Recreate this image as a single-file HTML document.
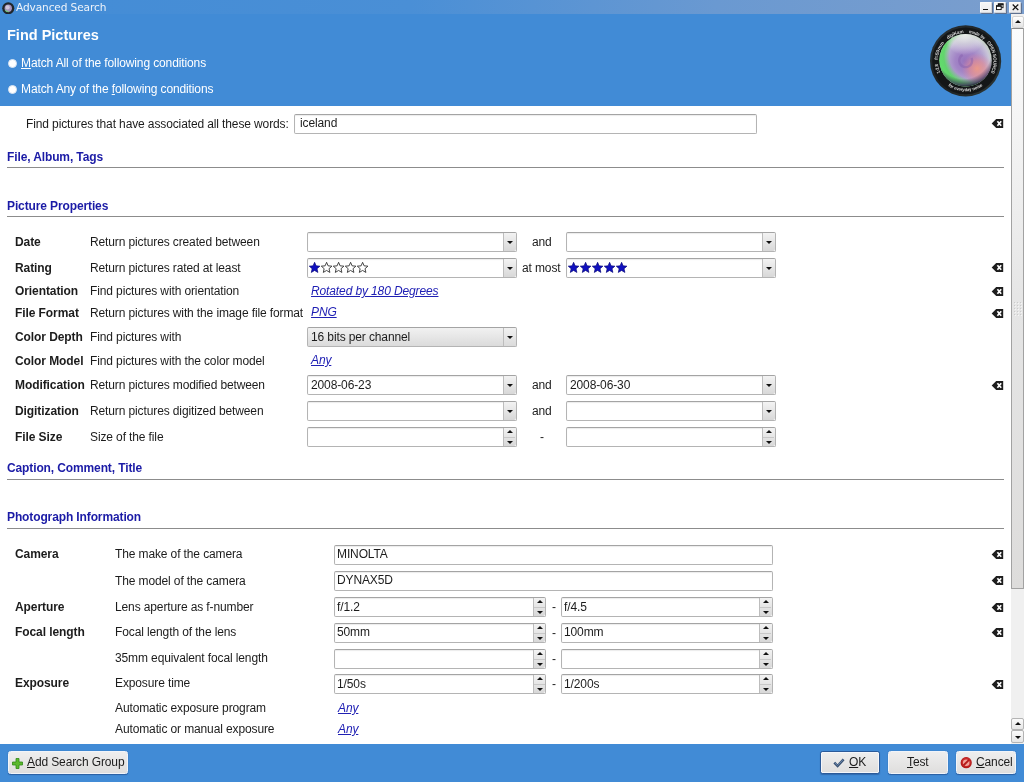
<!DOCTYPE html>
<html><head><meta charset="utf-8"><title>Advanced Search</title>
<style>
*{box-sizing:border-box;margin:0;padding:0}
html,body{width:1024px;height:782px;overflow:hidden;background:#fff}
body{font-family:"Liberation Sans",sans-serif;font-size:12px;letter-spacing:-0.12px;color:#1c1c1c;position:relative}
div,span,svg{position:absolute}
#titlebar{left:0;top:0;width:1024px;height:14px;background:linear-gradient(90deg,#438cd6 0%,#4a8fd6 40%,#6a99d1 70%,#7b9ecd 100%)}
#titlebar .tt{left:16px;top:-0.5px;font-family:"DejaVu Sans",sans-serif;font-size:10.6px;color:#eef3fa;line-height:14px;white-space:nowrap}
.wb{top:2px;width:12px;height:10.5px;background:linear-gradient(#f6f6f6,#ececee);border:1px solid #fafafa;border-right-color:#d0d4da;border-bottom-color:#d0d4da;border-radius:1px;box-shadow:1px 1px 0 #5f7190}
#header{left:0;top:14px;width:1011px;height:92px;background:#418bd6}
#footer{left:0;top:744px;width:1024px;height:38px;background:#418bd6}
.t,.b,.hd,.lk{white-space:nowrap;line-height:16px;height:16px;margin-top:-7px}
.b{font-weight:bold;left:15px;letter-spacing:-0.08px}
.hd{left:7px;font-weight:bold;color:#1b1ba6}
.hr{left:7px;width:997px;height:1px;background:#8c8c8c}
.lk{font-style:italic;color:#2020b4;text-decoration:underline}
.w{color:#fff}
.cb,.sp,.le{height:20px;background:#fff;border:1px solid #b4b4b4;border-top-color:#a4a4a4;border-radius:2px;box-shadow:inset 0 1px 1px rgba(0,0,0,.08)}
.cb .btn,.sp .btn{right:0;top:0;width:13px;height:18px;border-left:1px solid #bdbdbd;background:linear-gradient(#f3f3f3,#d8d8d8);border-radius:0 2px 2px 0}
.cb.g{background:linear-gradient(#f1f1f1,#dbdbdb);box-shadow:none}

.cb .v{left:3px}
.cb.g .btn{background:none;border-left:1px solid #bdbdbd}
.v{left:2px;top:1px;line-height:16px;white-space:nowrap}
.ar{left:3px;width:0;height:0;border-left:3px solid transparent;border-right:3px solid transparent}
.ar.d{border-top:3.4px solid #111}
.ar.u{border-bottom:3.4px solid #111}
.sp .btn{width:12px}
.sp .ar{left:2.5px}
.sp.w13 .btn{width:13px}
.sp.w13 .ar{left:3px}
.pb{height:23px;border:1px solid #f1f4f9;border-radius:2.5px;background:linear-gradient(#eeeeee,#dfdedd);top:751px;box-shadow:0 1px 1px rgba(25,60,120,.55),0 0 1px rgba(25,60,120,.35)}
.pb.def{border-color:#2b5a99;box-shadow:inset 0 0 0 1px #f4f6fa,0 1px 1px rgba(25,60,120,.4)}
.pb .lbl{top:2px;line-height:16px;white-space:nowrap}
.rad{left:8px;width:9px;height:9px;border-radius:50%;background:#fff;border:1px solid #d8e4f2}
</style></head><body><div id="root" style="left:0;top:0;width:1024px;height:782px;will-change:transform">
<div id="titlebar"><span class="tt">Advanced Search</span>
<svg style="left:2px;top:1.5px" width="12.5" height="12.5" viewBox="0 0 12 12"><circle cx="6" cy="6" r="5.8" fill="#20262a"/><circle cx="6" cy="6" r="3.5" fill="#a893bd"/><circle cx="5.4" cy="5.2" r="2" fill="#cfc6d8"/><path d="M3 7.5A3.5 3.5 0 0 0 6.5 9.4" stroke="#6fc878" stroke-width="1" fill="none"/></svg>
<div class="wb" style="left:980px"><div style="left:2px;top:5.8px;width:5px;height:1.6px;background:#111"></div></div>
<div class="wb" style="left:994px"><svg style="left:1px;top:0.3px" width="7.5" height="7.5" viewBox="0 0 8 7"><rect x="2.5" y="0.5" width="5" height="4" fill="none" stroke="#111"/><rect x="2" y="0" width="6" height="1.5" fill="#111"/><rect x="0.5" y="2.5" width="5" height="4" fill="#fff" stroke="#111"/><rect x="0" y="2" width="6" height="1.5" fill="#111"/></svg></div>
<div class="wb" style="left:1009px"><svg style="left:2px;top:1px" width="7" height="6.5" viewBox="0 0 7 7"><path d="M0.5 0.5L6.5 6.5M6.5 0.5L0.5 6.5" stroke="#111" stroke-width="1.3"/></svg></div>
</div>
<div id="header">
<span class="w" style="left:7px;top:12px;font-size:14.5px;letter-spacing:0;font-weight:bold;line-height:18px;white-space:nowrap">Find Pictures</span>
<div class="rad" style="top:45px"></div><span class="t w" style="left:21px;top:48px"><u>M</u>atch All of the following conditions</span>
<div class="rad" style="top:71px"></div><span class="t w" style="left:21px;top:74px">Match Any of the <u>f</u>ollowing conditions</span>
<svg style="left:930px;top:11px" width="72" height="72" viewBox="0 0 72 72">
<defs>
<radialGradient id="lg" cx="0.5" cy="0.52" r="0.5"><stop offset="0" stop-color="#9672bc"/><stop offset="0.4" stop-color="#a285c6"/><stop offset="0.68" stop-color="#b3a3d0"/><stop offset="0.9" stop-color="#c9c6d8"/><stop offset="1" stop-color="#c4cec6"/></radialGradient>
<radialGradient id="gr" cx="0.63" cy="0.42" r="0.64"><stop offset="0" stop-color="#52d45c" stop-opacity="0"/><stop offset="0.68" stop-color="#52d45c" stop-opacity="0"/><stop offset="0.85" stop-color="#58d662" stop-opacity="0.9"/><stop offset="1" stop-color="#62dc6c"/></radialGradient>
<radialGradient id="or" cx="0.72" cy="0.66" r="0.30"><stop offset="0" stop-color="#ee9a86" stop-opacity="0.95"/><stop offset="0.5" stop-color="#e48c92" stop-opacity="0.65"/><stop offset="1" stop-color="#d884a8" stop-opacity="0"/></radialGradient>
<radialGradient id="hl" cx="0.48" cy="0.0" r="0.40"><stop offset="0" stop-color="#eef0ee" stop-opacity="0.9"/><stop offset="0.5" stop-color="#e2e6e2" stop-opacity="0.55"/><stop offset="1" stop-color="#fff" stop-opacity="0"/></radialGradient>
<radialGradient id="sh" cx="0.46" cy="0.32" r="0.70"><stop offset="0.76" stop-color="#2a1840" stop-opacity="0"/><stop offset="0.92" stop-color="#3a2558" stop-opacity="0.7"/><stop offset="1" stop-color="#15101c" stop-opacity="1"/></radialGradient>
<linearGradient id="rim" x1="0" y1="0" x2="1" y2="1"><stop offset="0" stop-color="#2c3438"/><stop offset="0.5" stop-color="#1c2022"/><stop offset="1" stop-color="#303a38"/></linearGradient>
<path id="tp" d="M10.31 47.69A27.9 27.9 0 0 1 60.89 24.11A27.9 27.9 0 0 1 10.31 47.69"/>
<path id="bp" d="M17.95 60.65A30.4 30.4 0 0 0 52.60 61.10"/>
</defs>
<circle cx="35.6" cy="35.9" r="35.6" fill="url(#rim)"/>
<circle cx="35.6" cy="35.9" r="33.4" fill="#141617"/>
<g>
<circle cx="35.6" cy="35.3" r="26.2" fill="url(#lg)"/>
<circle cx="35.6" cy="35.3" r="26.2" fill="url(#gr)"/>
<circle cx="35.6" cy="35.3" r="26.2" fill="url(#or)"/>
<path d="M32.6 29.9a6.5 6.5 0 1 0 9 3" fill="none" stroke="#8660ae" stroke-width="2.4" opacity="0.45"/>
<circle cx="35.6" cy="35.3" r="26.2" fill="url(#hl)"/>
<circle cx="35.6" cy="35.3" r="26.2" fill="url(#sh)"/>
</g>
<text font-family="Liberation Sans,sans-serif" font-size="4.6" font-weight="bold" fill="#d6d6d6"><textPath href="#tp" startOffset="0.00" textLength="9.25" lengthAdjust="spacingAndGlyphs">1:2.8</textPath></text>
<text font-family="Liberation Sans,sans-serif" font-size="4.6" font-weight="bold" fill="#d6d6d6"><textPath href="#tp" startOffset="13.05" textLength="18.50" lengthAdjust="spacingAndGlyphs">f=50mm</textPath></text>
<text font-family="Liberation Sans,sans-serif" font-size="4.6" font-weight="bold" fill="#d6d6d6"><textPath href="#tp" startOffset="36.62" textLength="17.19" lengthAdjust="spacingAndGlyphs">digiKam</textPath></text>
<text font-family="Liberation Sans,sans-serif" font-size="4.6" font-weight="bold" fill="#d6d6d6"><textPath href="#tp" startOffset="58.73" textLength="16.60" lengthAdjust="spacingAndGlyphs">made by</textPath></text>
<text font-family="Liberation Sans,sans-serif" font-size="4.6" font-weight="bold" fill="#d6d6d6"><textPath href="#tp" startOffset="79.23" textLength="32.38" lengthAdjust="spacingAndGlyphs">OPEN SOURCE</textPath></text>
<text font-family="Liberation Sans,sans-serif" font-size="4.6" font-weight="bold" fill="#d6d6d6"><textPath href="#bp" startOffset="0" textLength="36.88" lengthAdjust="spacingAndGlyphs">for everyday noise</textPath></text>
</svg>

</div>
<span class="t" style="left:26px;top:123px">Find pictures that have associated all these words:</span>
<div class="le" style="left:294px;top:114px;width:463px"><span class="v" style="left:5px;top:0px">iceland</span></div>
<svg style="left:991px;top:118px" width="13" height="11" viewBox="0 0 13 11"><path d="M0.7 5.5L5.2 1.1H12.2V9.9H5.2Z" fill="#1e1e1e"/><path d="M6.4 3.3L10.2 7.7M10.2 3.3L6.4 7.7" stroke="#fff" stroke-width="1.7"/></svg>
<span class="hd" style="top:156px">File, Album, Tags</span><div class="hr" style="top:167px"></div>
<span class="hd" style="top:205px">Picture Properties</span><div class="hr" style="top:216px"></div>
<span class="b" style="top:241px">Date</span>
<span class="t" style="left:90px;top:241px">Return pictures created between</span>
<span class="b" style="top:267px">Rating</span>
<span class="t" style="left:90px;top:267px">Return pictures rated at least</span>
<span class="b" style="top:290px">Orientation</span>
<span class="t" style="left:90px;top:290px">Find pictures with orientation</span>
<span class="b" style="top:312px">File Format</span>
<span class="t" style="left:90px;top:312px">Return pictures with the image file format</span>
<span class="b" style="top:336px">Color Depth</span>
<span class="t" style="left:90px;top:336px">Find pictures with</span>
<span class="b" style="top:360px">Color Model</span>
<span class="t" style="left:90px;top:360px">Find pictures with the color model</span>
<span class="b" style="top:384px">Modification</span>
<span class="t" style="left:90px;top:384px">Return pictures modified between</span>
<span class="b" style="top:410px">Digitization</span>
<span class="t" style="left:90px;top:410px">Return pictures digitized between</span>
<span class="b" style="top:436px">File Size</span>
<span class="t" style="left:90px;top:436px">Size of the file</span>
<div class="cb" style="left:307px;top:232px;width:210px"><div class="btn"><div class="ar d" style="top:8px"></div></div></div>
<span class="t" style="left:532px;top:241px">and</span>
<div class="cb" style="left:566px;top:232px;width:210px"><div class="btn"><div class="ar d" style="top:8px"></div></div></div>
<div class="cb" style="left:307px;top:258px;width:210px"><svg style="left:1px;top:3px" width="62" height="12" viewBox="0 0 62 12"><polygon points="5.60,0.30 7.10,3.84 10.93,4.17 8.03,6.69 8.89,10.43 5.60,8.45 2.31,10.43 3.17,6.69 0.27,4.17 4.10,3.84" fill="#1010c0" stroke="#08087a" stroke-width="0.7"/><polygon points="17.60,0.30 19.10,3.84 22.93,4.17 20.03,6.69 20.89,10.43 17.60,8.45 14.31,10.43 15.17,6.69 12.27,4.17 16.10,3.84" fill="#fff" stroke="#333" stroke-width="0.9"/><polygon points="29.60,0.30 31.10,3.84 34.93,4.17 32.03,6.69 32.89,10.43 29.60,8.45 26.31,10.43 27.17,6.69 24.27,4.17 28.10,3.84" fill="#fff" stroke="#333" stroke-width="0.9"/><polygon points="41.60,0.30 43.10,3.84 46.93,4.17 44.03,6.69 44.89,10.43 41.60,8.45 38.31,10.43 39.17,6.69 36.27,4.17 40.10,3.84" fill="#fff" stroke="#333" stroke-width="0.9"/><polygon points="53.60,0.30 55.10,3.84 58.93,4.17 56.03,6.69 56.89,10.43 53.60,8.45 50.31,10.43 51.17,6.69 48.27,4.17 52.10,3.84" fill="#fff" stroke="#333" stroke-width="0.9"/></svg><div class="btn"><div class="ar d" style="top:8px"></div></div></div>
<span class="t" style="left:522px;top:267px">at most</span>
<div class="cb" style="left:566px;top:258px;width:210px"><svg style="left:1px;top:3px" width="62" height="12" viewBox="0 0 62 12"><polygon points="5.60,0.30 7.10,3.84 10.93,4.17 8.03,6.69 8.89,10.43 5.60,8.45 2.31,10.43 3.17,6.69 0.27,4.17 4.10,3.84" fill="#1010c0" stroke="#08087a" stroke-width="0.7"/><polygon points="17.60,0.30 19.10,3.84 22.93,4.17 20.03,6.69 20.89,10.43 17.60,8.45 14.31,10.43 15.17,6.69 12.27,4.17 16.10,3.84" fill="#1010c0" stroke="#08087a" stroke-width="0.7"/><polygon points="29.60,0.30 31.10,3.84 34.93,4.17 32.03,6.69 32.89,10.43 29.60,8.45 26.31,10.43 27.17,6.69 24.27,4.17 28.10,3.84" fill="#1010c0" stroke="#08087a" stroke-width="0.7"/><polygon points="41.60,0.30 43.10,3.84 46.93,4.17 44.03,6.69 44.89,10.43 41.60,8.45 38.31,10.43 39.17,6.69 36.27,4.17 40.10,3.84" fill="#1010c0" stroke="#08087a" stroke-width="0.7"/><polygon points="53.60,0.30 55.10,3.84 58.93,4.17 56.03,6.69 56.89,10.43 53.60,8.45 50.31,10.43 51.17,6.69 48.27,4.17 52.10,3.84" fill="#1010c0" stroke="#08087a" stroke-width="0.7"/></svg><div class="btn"><div class="ar d" style="top:8px"></div></div></div>
<svg style="left:991px;top:262px" width="13" height="11" viewBox="0 0 13 11"><path d="M0.7 5.5L5.2 1.1H12.2V9.9H5.2Z" fill="#1e1e1e"/><path d="M6.4 3.3L10.2 7.7M10.2 3.3L6.4 7.7" stroke="#fff" stroke-width="1.7"/></svg>
<span class="lk" style="left:311px;top:290px">Rotated by 180 Degrees</span>
<svg style="left:991px;top:286px" width="13" height="11" viewBox="0 0 13 11"><path d="M0.7 5.5L5.2 1.1H12.2V9.9H5.2Z" fill="#1e1e1e"/><path d="M6.4 3.3L10.2 7.7M10.2 3.3L6.4 7.7" stroke="#fff" stroke-width="1.7"/></svg>
<span class="lk" style="left:311px;top:311px">PNG</span>
<svg style="left:991px;top:308px" width="13" height="11" viewBox="0 0 13 11"><path d="M0.7 5.5L5.2 1.1H12.2V9.9H5.2Z" fill="#1e1e1e"/><path d="M6.4 3.3L10.2 7.7M10.2 3.3L6.4 7.7" stroke="#fff" stroke-width="1.7"/></svg>
<div class="cb g" style="left:307px;top:327px;width:210px"><span class="v">16 bits per channel</span><div class="btn"><div class="ar d" style="top:8px"></div></div></div>
<span class="lk" style="left:311px;top:359px">Any</span>
<div class="cb" style="left:307px;top:375px;width:210px"><span class="v">2008-06-23</span><div class="btn"><div class="ar d" style="top:8px"></div></div></div>
<span class="t" style="left:532px;top:384px">and</span>
<div class="cb" style="left:566px;top:375px;width:210px"><span class="v">2008-06-30</span><div class="btn"><div class="ar d" style="top:8px"></div></div></div>
<svg style="left:991px;top:380px" width="13" height="11" viewBox="0 0 13 11"><path d="M0.7 5.5L5.2 1.1H12.2V9.9H5.2Z" fill="#1e1e1e"/><path d="M6.4 3.3L10.2 7.7M10.2 3.3L6.4 7.7" stroke="#fff" stroke-width="1.7"/></svg>
<div class="cb" style="left:307px;top:401px;width:210px"><div class="btn"><div class="ar d" style="top:8px"></div></div></div>
<span class="t" style="left:532px;top:410px">and</span>
<div class="cb" style="left:566px;top:401px;width:210px"><div class="btn"><div class="ar d" style="top:8px"></div></div></div>
<div class="sp w13" style="left:307px;top:427px;width:210px"><div class="btn"><div class="ar u" style="top:2.4px"></div><div style="left:0;top:9px;width:11px;height:1px;background:#c8c8c8"></div><div class="ar d" style="top:12.8px"></div></div></div>
<span class="t" style="left:540px;top:436px">-</span>
<div class="sp w13" style="left:566px;top:427px;width:210px"><div class="btn"><div class="ar u" style="top:2.4px"></div><div style="left:0;top:9px;width:11px;height:1px;background:#c8c8c8"></div><div class="ar d" style="top:12.8px"></div></div></div>
<span class="hd" style="top:467px">Caption, Comment, Title</span><div class="hr" style="top:479px"></div>
<span class="hd" style="top:516px">Photograph Information</span><div class="hr" style="top:528px"></div>
<span class="b" style="top:553px">Camera</span>
<span class="t" style="left:115px;top:553px">The make of the camera</span>
<span class="t" style="left:115px;top:580px">The model of the camera</span>
<span class="b" style="top:606px">Aperture</span>
<span class="t" style="left:115px;top:606px">Lens aperture as f-number</span>
<span class="b" style="top:631px">Focal length</span>
<span class="t" style="left:115px;top:631px">Focal length of the lens</span>
<span class="t" style="left:115px;top:657px">35mm equivalent focal length</span>
<span class="b" style="top:682px">Exposure</span>
<span class="t" style="left:115px;top:682px">Exposure time</span>
<span class="t" style="left:115px;top:707px">Automatic exposure program</span>
<span class="t" style="left:115px;top:728px">Automatic or manual exposure</span>
<div class="le" style="left:334px;top:545px;width:439px"><span class="v" style="left:2px;top:0px">MINOLTA</span></div>
<svg style="left:991px;top:549px" width="13" height="11" viewBox="0 0 13 11"><path d="M0.7 5.5L5.2 1.1H12.2V9.9H5.2Z" fill="#1e1e1e"/><path d="M6.4 3.3L10.2 7.7M10.2 3.3L6.4 7.7" stroke="#fff" stroke-width="1.7"/></svg>
<div class="le" style="left:334px;top:571px;width:439px"><span class="v" style="left:2px;top:0px">DYNAX5D</span></div>
<svg style="left:991px;top:575px" width="13" height="11" viewBox="0 0 13 11"><path d="M0.7 5.5L5.2 1.1H12.2V9.9H5.2Z" fill="#1e1e1e"/><path d="M6.4 3.3L10.2 7.7M10.2 3.3L6.4 7.7" stroke="#fff" stroke-width="1.7"/></svg>
<div class="sp" style="left:334px;top:597px;width:212px"><span class="v" style="top:1px">f/1.2</span><div class="btn"><div class="ar u" style="top:2.4px"></div><div style="left:0;top:9px;width:11px;height:1px;background:#c8c8c8"></div><div class="ar d" style="top:12.8px"></div></div></div>
<span class="t" style="left:552px;top:606px">-</span>
<div class="sp w13" style="left:561px;top:597px;width:212px"><span class="v" style="top:1px">f/4.5</span><div class="btn"><div class="ar u" style="top:2.4px"></div><div style="left:0;top:9px;width:11px;height:1px;background:#c8c8c8"></div><div class="ar d" style="top:12.8px"></div></div></div>
<svg style="left:991px;top:602px" width="13" height="11" viewBox="0 0 13 11"><path d="M0.7 5.5L5.2 1.1H12.2V9.9H5.2Z" fill="#1e1e1e"/><path d="M6.4 3.3L10.2 7.7M10.2 3.3L6.4 7.7" stroke="#fff" stroke-width="1.7"/></svg>
<div class="sp" style="left:334px;top:623px;width:212px"><span class="v" style="top:0px">50mm</span><div class="btn"><div class="ar u" style="top:2.4px"></div><div style="left:0;top:9px;width:11px;height:1px;background:#c8c8c8"></div><div class="ar d" style="top:12.8px"></div></div></div>
<span class="t" style="left:552px;top:632px">-</span>
<div class="sp w13" style="left:561px;top:623px;width:212px"><span class="v" style="top:0px">100mm</span><div class="btn"><div class="ar u" style="top:2.4px"></div><div style="left:0;top:9px;width:11px;height:1px;background:#c8c8c8"></div><div class="ar d" style="top:12.8px"></div></div></div>
<svg style="left:991px;top:627px" width="13" height="11" viewBox="0 0 13 11"><path d="M0.7 5.5L5.2 1.1H12.2V9.9H5.2Z" fill="#1e1e1e"/><path d="M6.4 3.3L10.2 7.7M10.2 3.3L6.4 7.7" stroke="#fff" stroke-width="1.7"/></svg>
<div class="sp" style="left:334px;top:649px;width:212px"><div class="btn"><div class="ar u" style="top:2.4px"></div><div style="left:0;top:9px;width:11px;height:1px;background:#c8c8c8"></div><div class="ar d" style="top:12.8px"></div></div></div>
<span class="t" style="left:552px;top:658px">-</span>
<div class="sp w13" style="left:561px;top:649px;width:212px"><div class="btn"><div class="ar u" style="top:2.4px"></div><div style="left:0;top:9px;width:11px;height:1px;background:#c8c8c8"></div><div class="ar d" style="top:12.8px"></div></div></div>
<div class="sp" style="left:334px;top:674px;width:212px"><span class="v" style="top:1px">1/50s</span><div class="btn"><div class="ar u" style="top:2.4px"></div><div style="left:0;top:9px;width:11px;height:1px;background:#c8c8c8"></div><div class="ar d" style="top:12.8px"></div></div></div>
<span class="t" style="left:552px;top:683px">-</span>
<div class="sp w13" style="left:561px;top:674px;width:212px"><span class="v" style="top:1px">1/200s</span><div class="btn"><div class="ar u" style="top:2.4px"></div><div style="left:0;top:9px;width:11px;height:1px;background:#c8c8c8"></div><div class="ar d" style="top:12.8px"></div></div></div>
<svg style="left:991px;top:679px" width="13" height="11" viewBox="0 0 13 11"><path d="M0.7 5.5L5.2 1.1H12.2V9.9H5.2Z" fill="#1e1e1e"/><path d="M6.4 3.3L10.2 7.7M10.2 3.3L6.4 7.7" stroke="#fff" stroke-width="1.7"/></svg>
<span class="lk" style="left:338px;top:707px">Any</span>
<span class="lk" style="left:338px;top:728px">Any</span>
<div style="left:1011px;top:14px;width:13px;height:730px;background:#f0f0f0"><div style="left:1px;top:2px;width:12px;height:12px;background:linear-gradient(#ffffff,#e4e4e4);border:1px solid #d4d4d4;border-radius:2px"><div class="ar u" style="left:2px;top:2.6px"></div></div><div style="left:0;top:14px;width:13px;height:561px;background:linear-gradient(#fcfcfc 0%,#f3f3f3 20%,#e5e5e5 50%,#dddcdb 100%);border:1px solid #a2a2a2;border-top-color:#8a8a8a;border-radius:1px"><div style="left:1.5px;top:272.5px;width:1.5px;height:1.5px;background:#cbcbcb;box-shadow:1px 1px 0 #f6f6f6"></div><div style="left:4.5px;top:272.5px;width:1.5px;height:1.5px;background:#cbcbcb;box-shadow:1px 1px 0 #f6f6f6"></div><div style="left:7.5px;top:272.5px;width:1.5px;height:1.5px;background:#cbcbcb;box-shadow:1px 1px 0 #f6f6f6"></div><div style="left:1.5px;top:275.5px;width:1.5px;height:1.5px;background:#cbcbcb;box-shadow:1px 1px 0 #f6f6f6"></div><div style="left:4.5px;top:275.5px;width:1.5px;height:1.5px;background:#cbcbcb;box-shadow:1px 1px 0 #f6f6f6"></div><div style="left:7.5px;top:275.5px;width:1.5px;height:1.5px;background:#cbcbcb;box-shadow:1px 1px 0 #f6f6f6"></div><div style="left:1.5px;top:278.5px;width:1.5px;height:1.5px;background:#cbcbcb;box-shadow:1px 1px 0 #f6f6f6"></div><div style="left:4.5px;top:278.5px;width:1.5px;height:1.5px;background:#cbcbcb;box-shadow:1px 1px 0 #f6f6f6"></div><div style="left:7.5px;top:278.5px;width:1.5px;height:1.5px;background:#cbcbcb;box-shadow:1px 1px 0 #f6f6f6"></div><div style="left:1.5px;top:281.5px;width:1.5px;height:1.5px;background:#cbcbcb;box-shadow:1px 1px 0 #f6f6f6"></div><div style="left:4.5px;top:281.5px;width:1.5px;height:1.5px;background:#cbcbcb;box-shadow:1px 1px 0 #f6f6f6"></div><div style="left:7.5px;top:281.5px;width:1.5px;height:1.5px;background:#cbcbcb;box-shadow:1px 1px 0 #f6f6f6"></div><div style="left:1.5px;top:284.5px;width:1.5px;height:1.5px;background:#cbcbcb;box-shadow:1px 1px 0 #f6f6f6"></div><div style="left:4.5px;top:284.5px;width:1.5px;height:1.5px;background:#cbcbcb;box-shadow:1px 1px 0 #f6f6f6"></div><div style="left:7.5px;top:284.5px;width:1.5px;height:1.5px;background:#cbcbcb;box-shadow:1px 1px 0 #f6f6f6"></div></div><div style="left:0;top:704px;width:13px;height:12px;background:linear-gradient(#fbfbfb,#e6e6e6);border:1px solid #b4b4b4;border-radius:2px"><div class="ar u" style="left:2.5px;top:3px"></div></div><div style="left:0;top:716px;width:13px;height:13px;background:linear-gradient(#fbfbfb,#e6e6e6);border:1px solid #b4b4b4;border-radius:2px"><div class="ar d" style="left:2.5px;top:4.5px"></div></div></div>
<div id="footer"></div>
<div class="pb" style="left:8px;width:120px"><svg style="left:3px;top:6px" width="11" height="11" viewBox="0 0 11 11"><path d="M4 0.5h3v3.5h3.5v3H7v3.5H4V7H0.5V4H4z" fill="#5cb82e" stroke="#2f8a18" stroke-width="0.8"/></svg><span class="lbl" style="left:18px"><u>A</u>dd Search Group</span></div>
<div class="pb def" style="left:820px;width:60px"><svg style="left:12px;top:6px" width="12" height="10" viewBox="0 0 12 10"><path d="M1.3 4.6L4.6 8L10.6 1.4" fill="none" stroke="#3a5272" stroke-width="2.5"/><path d="M1.6 4.6L4.6 7.4L10.2 1.6" fill="none" stroke="#6f8db4" stroke-width="0.9"/></svg><span class="lbl" style="left:28px"><u>O</u>K</span></div>
<div class="pb" style="left:888px;width:60px"><span class="lbl" style="left:18px"><u>T</u>est</span></div>
<div class="pb" style="left:956px;width:60px"><svg style="left:3px;top:5px" width="12" height="12" viewBox="0 0 12 12"><circle cx="6.2" cy="5.7" r="5.6" fill="#b51a1a"/><circle cx="6.2" cy="5.2" r="4.6" fill="#c82a2a"/><circle cx="6.2" cy="5.7" r="3.3" fill="#f2a49c"/><path d="M3.4 8.5L9 2.9" stroke="#b51a1a" stroke-width="1.9"/></svg><span class="lbl" style="left:19px"><u>C</u>ancel</span></div>
</div></body></html>
